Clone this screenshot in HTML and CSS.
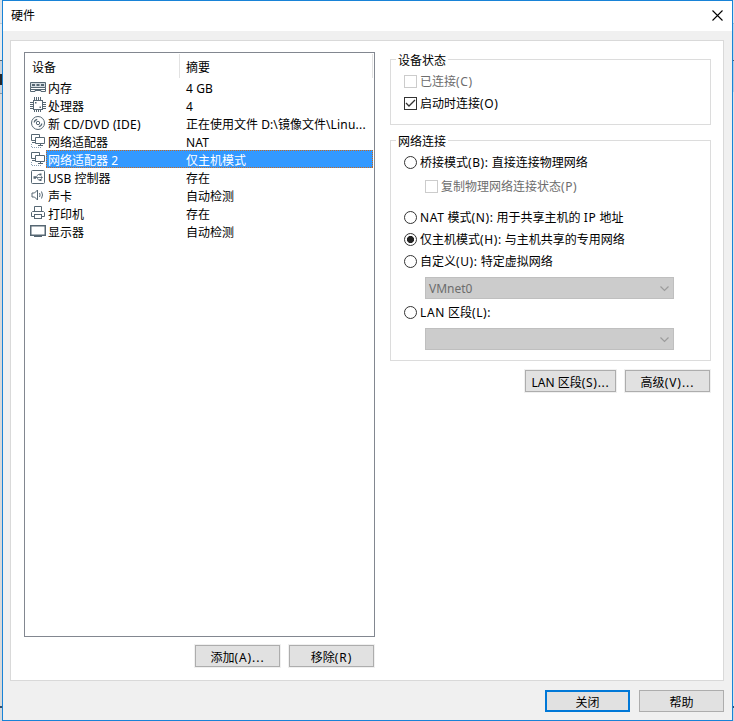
FILE: index.html
```html
<!DOCTYPE html>
<html lang="zh-CN">
<head>
<meta charset="utf-8">
<title>硬件</title>
<link rel="stylesheet" href="styles.css">
</head>
<body>
<div class="backdrop-left"></div>
<main class="dialog">
  <header class="titlebar">
    <span>硬件</span>
    <svg class="close" width="11" height="11" viewBox="0 0 11 11"><path d="M.5.5l10 10M10.5.5l-10 10"/></svg>
  </header>
  <div class="panel">
    <section class="left">
      <div class="list">
        <div class="head"><span class="h1">设备</span><span class="h2">摘要</span></div>
        <div class="row">
          <svg class="ic" viewBox="0 0 16 18"><path d="M.5 4.500h15v5h-15z" fill="#d5dde2"/><path d="M.5 9.500v4h4.500v-1h6v1h4.500v-4M1 11.500h14"/><path d="M2 6h3v2h-3zM6.500 6h3v2h-3zM11 6h3v2h-3z" class="f"/></svg>
          <span class="name">内存</span><span class="sum"><b>4 GB</b></span></div>
        <div class="row">
          <svg class="ic" viewBox="0 0 16 18"><rect x="3.500" y="4.500" width="9" height="9"/><path d="M4.500 1v3M6.500 1v3M8.500 1v3M10.500 1v3M4.500 14v2M6.500 14v2M8.500 14v2M10.500 14v2M0 6.500h3M0 8.500h3M0 10.500h3M0 12.500h3M13 6.500h3M13 8.500h3M13 10.500h3M13 12.500h3"/><path d="M5 6h1.500v1.500h-1.500zM9.500 10.500h1.500v1.500h-1.500z" class="f"/></svg>
          <span class="name">处理器</span><span class="sum"><b>4</b></span></div>
        <div class="row">
          <svg class="ic" viewBox="0 0 16 18"><circle cx="8" cy="9" r="6.500"/><circle cx="8" cy="9" r="1.700"/><path d="M4.200 8.500a3.700 3.700 0 0 1 3-3.200M11.800 9.500a3.700 3.700 0 0 1-3 3.200" stroke-width="1.200"/></svg>
          <span class="name">新 <b class="cd">CD/DVD (IDE)</b></span><span class="sum">正在使用文件 <b>D:\</b>镜像文件<b class="cd">\Linu...</b></span></div>
        <div class="row">
          <svg class="ic" viewBox="0 0 16 18"><path d="M5 8.500h-3.500v-6h8v2.500M2 10.500h3"/><path d="M5.500 5.500h9v6h-9zM10.500 12v1.500M8 13.500h5"/><path d="M1.500 12v3.500h9.500" class="dot"/></svg>
          <span class="name">网络适配器</span><span class="sum"><b>NAT</b></span></div>
        <div class="row selected">
          <svg class="ic" viewBox="0 0 16 18"><path d="M5 8.500h-3.500v-6h8v2.500M2 10.500h3"/><path d="M5.500 5.500h9v6h-9zM10.500 12v1.500M8 13.500h5"/><path d="M1.500 12v3.500h9.500" class="dot"/></svg>
          <span class="name">网络适配器 <b>2</b></span><span class="sum">仅主机模式</span></div>
        <div class="row">
          <svg class="ic" viewBox="0 0 16 18"><rect x="1.500" y="2.500" width="13" height="13" rx="1"/><path d="M4 9.500h8M6 9.500l2-3h2M7 9.500l1.500 2.500h2" stroke-width=".8"/><path d="M3.500 8.200h2.500v2.600h-2.500zM9.500 5.500h2v2h-2zM9.500 11h2v2h-2zM11 8l2 1.500-2 1.500z" class="f"/></svg>
          <span class="name"><b>USB</b> 控制器</span><span class="sum">存在</span></div>
        <div class="row">
          <svg class="ic" viewBox="0 0 16 18"><path d="M2 7h2.500l3-3v10l-3-3h-2.500z"/><path d="M9.500 7q1.200 2 0 4M11.500 5.500q2 3.500 0 7"/></svg>
          <span class="name">声卡</span><span class="sum">自动检测</span></div>
        <div class="row">
          <svg class="ic" viewBox="0 0 16 18"><path d="M4.500 7.500v-5h7v5M4 12.500h-2.500v-4l1-1h11l1 1v4h-2.500"/><rect x="4.500" y="10.500" width="7" height="4"/></svg>
          <span class="name">打印机</span><span class="sum">存在</span></div>
        <div class="row">
          <svg class="ic" viewBox="0 0 16 18"><rect x=".75" y="3.750" width="14.500" height="9.500" stroke-width="1.500"/><path d="M4 14.500h8"/></svg>
          <span class="name">显示器</span><span class="sum">自动检测</span></div>
      </div>
      <div class="actions"><button>添加<b>(A)...</b></button><button>移除<b>(R)</b></button></div>
    </section>
    <section class="right">
      <fieldset class="status">
        <legend>设备状态</legend>
        <label class="opt off"><i class="box"></i>已连接<b>(C)</b></label>
        <label class="opt"><i class="box"><svg width="11" height="11" viewBox="0 0 11 11"><path d="M1 5l3 3 6-6"/></svg></i>启动时连接<b>(O)</b></label>
      </fieldset>
      <fieldset class="network">
        <legend>网络连接</legend>
        <label class="opt"><i class="radio"></i>桥接模式<b>(B):</b> 直接连接物理网络</label>
        <label class="opt off sub"><i class="box"></i>复制物理网络连接状态<b>(P)</b></label>
        <label class="opt"><i class="radio"></i><b>NAT</b> 模式<b>(N):</b> 用于共享主机的 <b>IP</b> 地址</label>
        <label class="opt"><i class="radio on"></i>仅主机模式<b>(H):</b> 与主机共享的专用网络</label>
        <label class="opt"><i class="radio"></i>自定义<b>(U):</b> 特定虚拟网络</label>
        <div class="combo"><span>VMnet0</span><svg width="9" height="6" viewBox="0 0 9 6"><path d="M.5.5l4 4 4-4"/></svg></div>
        <label class="opt lan"><i class="radio"></i><b>LAN</b> 区段<b>(L):</b></label>
        <div class="combo"><span></span><svg width="9" height="6" viewBox="0 0 9 6"><path d="M.5.5l4 4 4-4"/></svg></div>
      </fieldset>
      <div class="actions more"><button class="wide">LAN 区段<b>(S)...</b></button><button>高级<b>(V)...</b></button></div>
    </section>
  </div>
  <footer><button class="primary">关闭</button><button>帮助</button></footer>
</main>
<div class="backdrop-right"></div>
</body>
</html>
```

FILE: styles.css
```css
* { box-sizing: border-box; }
body {
  margin: 0;
  display: grid;
  grid-template-columns: 2px 731px 1px;
  height: 721px;
  overflow: hidden;
  font: 12px/18px "Noto Sans", "Noto Sans CJK SC", sans-serif;
  color: #000;
  white-space: nowrap;
}
b { font-weight: 400; letter-spacing: .1px; }
.cd { letter-spacing: .2px; }
.backdrop-left {
  background: linear-gradient(#dfe3e8 0 23px, #c3c8cd 23px 24px, #e8eaec 24px 60px, #56646f 60px 61px, #c8d0d8 61px 74px, #26282b 74px 85px, #c8d0d8 85px 93px, #8c969f 93px 94px, #d9d9d9 94px 706px, #35506b 706px 708px, #d4d8dc 708px);
}
.backdrop-right {
  background: linear-gradient(#dce4ed 0 23px, #a9bacb 23px 24px, #c4d4e5 24px 60px, #4a5865 60px 61px, #b4cbe2 61px 92px, #dce1e6 92px 706px, #35506b 706px 708px, #c9d6e2 708px);
}
.dialog {
  border: 1px solid #1883d7;
  background: #f0f0f0;
  display: flex;
  flex-direction: column;
}
.titlebar {
  height: 30px;
  background: #fff;
  display: flex;
  justify-content: space-between;
  align-items: center;
  padding: 0 9px 0 8px;
}
.close { margin-top: -2px; }
.close path { stroke: #000; stroke-width: 1.1; fill: none; }
.panel {
  margin: 9px 8px 0 7px;
  width: 714px;
  height: 641px;
  border: 1px solid #d9d9d9;
  background: #fff;
  display: flex;
  gap: 15px;
  padding: 11px 12px 0 13px;
}
.left { width: 351px; }
.list {
  height: 585px;
  border: 1px solid #828790;
  padding: 1px 1px 0 0;
}
.head { display: flex; height: 24px; line-height: 27px; }
.h1 { width: 155px; padding-left: 7px; border-right: 1px solid #e2e2e2; }
.h2 { flex: 1; padding-left: 6px; border-right: 1px solid #e2e2e2; }
.row { display: grid; grid-template: 18px / 16px 134px 1fr; padding-left: 5px; height: 18px; line-height: 21px; }
.ic { width: 16px; height: 18px; fill: none; stroke: #566773; }
.ic .f { fill: #566773; stroke: none; }
.ic .dot { stroke-dasharray: 1 1; stroke: #8a9fb2; }
.name { padding-left: 2px; }
.sum { padding-left: 6px; }
.selected { position: relative; }
.selected .name, .selected .sum { color: #fff; background: #3399ff; }
.selected::after {
  content: "";
  position: absolute;
  inset: 0 0 0 21px;
  --h: linear-gradient(90deg, #c8691e 50%, transparent 50%);
  --v: linear-gradient(#c8691e 50%, transparent 50%);
  background:
    var(--h) 0 0 / 2px 1px repeat-x,
    var(--h) 0 100% / 2px 1px repeat-x,
    var(--v) 0 0 / 1px 2px repeat-y,
    var(--v) 100% 0 / 1px 2px repeat-y;
}
.actions { display: flex; justify-content: flex-end; gap: 9px; margin: 8px 1px 0 0; }
button {
  width: 85px;
  height: 22px;
  margin: 0;
  padding: 3px 0 0;
  font: inherit;
  line-height: 17px;
  color: #000;
  background: #e1e1e1;
  border: 1px solid #adadad;
  outline: 1px solid #f0f0f0;
}
button b { letter-spacing: .95px; }
.right { width: 321px; padding-top: 7px; }
fieldset { position: relative; margin: 0; border: 1px solid #dcdcdc; padding: 0 0 0 13px; display: flow-root; }
legend { position: absolute; top: -8px; left: 5px; padding: 0 2px; background: #fff; line-height: 18px; }
.status { height: 66px; padding-top: 11px; }
.network { height: 221px; margin-top: 15px; padding-top: 11px; }
.opt { display: flex; align-items: center; height: 22px; line-height: 20px; white-space: pre; }
.opt b { letter-spacing: .6px; }
.box, .radio { flex: none; width: 13px; height: 13px; border: 1px solid #333; margin: 0 3px 1px 0; background: #fff; }
.box svg { display: block; fill: none; stroke: #333; stroke-width: 1.3; }
.radio { border-radius: 50%; }
.on { background: radial-gradient(circle, #222 0 3.2px, #fff 3.9px); }
.off { color: #6d6d6d; }
.off .box { border-color: #ccc; }
.sub { margin: 2px 0 9px 21px; }
.combo {
  margin: 4px 0 0 21px;
  width: 249px;
  height: 22px;
  border: 1px solid #bfbfbf;
  background: #ccc;
  color: #6d6d6d;
  display: flex;
  align-items: center;
  justify-content: space-between;
  padding: 1px 4px 0 3px;
}
.combo svg { fill: none; stroke: #9c9c9c; stroke-width: 1.2; }
.lan { margin-top: 3px; }
.more { margin-top: 9px; }
.more .wide { width: 91px; }
.wide b { letter-spacing: .7px; }
footer { display: flex; justify-content: flex-end; gap: 9px; padding: 9px 8px 0 0; }
footer button { outline: 0; }
.primary { border: 2px solid #0078d7; padding-top: 2px; }
```
